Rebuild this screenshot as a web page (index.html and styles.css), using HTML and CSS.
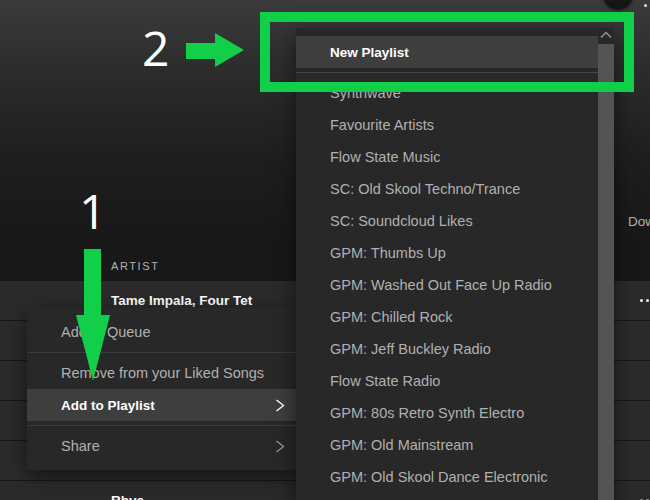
FILE: index.html
```html
<!DOCTYPE html>
<html>
<head>
<meta charset="utf-8">
<link rel="stylesheet" href="styles.css">
</head>
<body>
<div class="app">
  <header class="hero">
    <div class="hero-top"><span class="avatar"></span><span class="hero-dot"></span></div>
    <div class="hero-actions"><span class="download">Download</span></div>
  </header>
  <div class="list-head"><span class="col-artist">ARTIST</span></div>
  <div class="rows">
    <div class="row"><span class="artist">Tame Impala, Four Tet</span><span class="more"><i></i><i></i><i></i></span></div>
    <div class="row"></div>
    <div class="row"></div>
    <div class="row"></div>
    <div class="row"></div>
    <div class="row"><span class="artist">Rhye</span><span class="more dim"><i></i><i></i><i></i></span></div>
  </div>

  <div class="menu ctx">
    <div class="item">Add to Queue</div>
    <div class="sep"></div>
    <div class="item">Remove from your Liked Songs</div>
    <div class="item active">Add to Playlist
      <svg class="chev" width="10" height="13" viewBox="0 0 10 13"><polyline points="1.5,1 8.5,6.5 1.5,12" fill="none" stroke="currentColor" stroke-width="1.4"/></svg>
    </div>
    <div class="sep"></div>
    <div class="item">Share
      <svg class="chev dimchev" width="10" height="13" viewBox="0 0 10 13"><polyline points="1.5,1 8.5,6.5 1.5,12" fill="none" stroke="currentColor" stroke-width="1.2"/></svg>
    </div>
  </div>

  <div class="menu sub">
    <div class="sub-list">
      <div class="item active">New Playlist</div>
      <div class="sep light"></div>
      <div class="item">Synthwave</div>
      <div class="item">Favourite Artists</div>
      <div class="item">Flow State Music</div>
      <div class="item">SC: Old Skool Techno/Trance</div>
      <div class="item">SC: Soundcloud Likes</div>
      <div class="item">GPM: Thumbs Up</div>
      <div class="item">GPM: Washed Out Face Up Radio</div>
      <div class="item">GPM: Chilled Rock</div>
      <div class="item">GPM: Jeff Buckley Radio</div>
      <div class="item">Flow State Radio</div>
      <div class="item">GPM: 80s Retro Synth Electro</div>
      <div class="item">GPM: Old Mainstream</div>
      <div class="item">GPM: Old Skool Dance Electronic</div>
    </div>
    <div class="scroll">
      <div class="scroll-btn"><svg width="16" height="16" viewBox="0 0 16 16"><polyline points="3,9.5 8,4.5 13,9.5" fill="none" stroke="#9a9a9a" stroke-width="1.3"/></svg></div>
      <div class="scroll-thumb"></div>
    </div>
  </div>

  <div class="note-box"></div>
  <span class="note-num num2">2</span>
  <span class="note-num num1">1</span>
  <svg class="note-arrow arrow2" width="650" height="500" viewBox="0 0 650 500">
    <polygon points="186,43 215,43 215,33 244,50 215,67 215,59 186,59" fill="#12cf4a"/>
    <polygon points="84,249 101,249 101,315 110,315 93,381 76,315 84,315" fill="#12cf4a"/>
  </svg>
</div>
</body>
</html>
```
FILE: styles.css
```css
* { box-sizing: border-box; margin: 0; padding: 0; }
html, body { width: 650px; height: 500px; overflow: hidden; background: #181818; }
body { font-family: "Liberation Sans", Arial, sans-serif; }
.app { position: relative; width: 650px; height: 500px; overflow: hidden; }

.hero {
  height: 250px;
  background: linear-gradient(180deg, #3b3b3b 0, #2c2c2c 70px, #1e1e1e 160px, #181818 240px);
  display: flex;
  flex-direction: column;
}
.hero-top { display: flex; align-items: flex-end; gap: 11px; padding-left: 603px; margin-top: -20px; height: 30px; }
.avatar { width: 30px; height: 30px; border-radius: 50%; background: #161616; box-shadow: 0 0 4px rgba(0, 0, 0, 0.5); flex: none; }
.hero-dot { width: 3px; height: 3px; border-radius: 50%; background: #e0e0e0; margin-bottom: 3px; flex: none; }
.hero-actions { margin-top: auto; padding: 0 0 20px 628px; white-space: nowrap; }
.download { font-size: 13.5px; color: #b3b3b3; line-height: 16px; }

.list-head { height: 31px; display: flex; align-items: center; padding-left: 111px; }
.col-artist { font-size: 11px; letter-spacing: 1.6px; color: #b3b3b3; }

.row {
  height: 40px;
  border-bottom: 1px solid #181818;
  background: #2b2b2b;
  display: flex;
  align-items: center;
  padding-left: 111px;
}
.artist { font-size: 13.5px; font-weight: 700; color: #fff; }
.more { margin-left: auto; margin-right: -5px; display: flex; gap: 3px; }
.more i { width: 3px; height: 3px; border-radius: 50%; background: #f0f0f0; display: block; }
.more.dim i { background: #a0a0a0; }

.menu {
  position: absolute;
  background: #282828;
  box-shadow: 0 6px 20px rgba(0, 0, 0, 0.55);
  font-size: 14.5px;
  color: #b0b0b0;
}
.ctx { left: 27px; top: 308px; width: 272px; padding: 8px 0; }
.item {
  height: 32px;
  display: flex;
  align-items: center;
  justify-content: space-between;
  padding: 0 14px 0 34px;
  white-space: nowrap;
}
.item.active { background: #3e3e3e; color: #fff; font-weight: 700; font-size: 13.5px; }
.sep { height: 1px; background: #3b3b3b; margin: 4px 0; }
.sep.light { background: #454545; }
.chev { display: block; flex: none; }
.dimchev { color: #9a9a9a; }

.sub { left: 296px; top: 28px; width: 318px; height: 490px; display: grid; grid-template-columns: 1fr 16px; }
.sub-list { padding-top: 8px; }
.scroll { display: flex; flex-direction: column; }
.scroll-btn { height: 16px; }
.scroll-btn svg { display: block; }
.scroll-thumb { flex: 1; background: #545454; }

.note-box {
  position: absolute;
  left: 260px;
  top: 12px;
  width: 374px;
  height: 80px;
  border: 10px solid #12cf4a;
}
.note-num {
  position: absolute;
  font-family: "Open Sans", sans-serif;
  font-size: 48px;
  line-height: 48px;
  color: #fff;
}
.num2 { left: 142px; top: 24px; }
.num1 { left: 79px; top: 187px; }
.note-arrow { position: absolute; left: 0; top: 0; }
```
